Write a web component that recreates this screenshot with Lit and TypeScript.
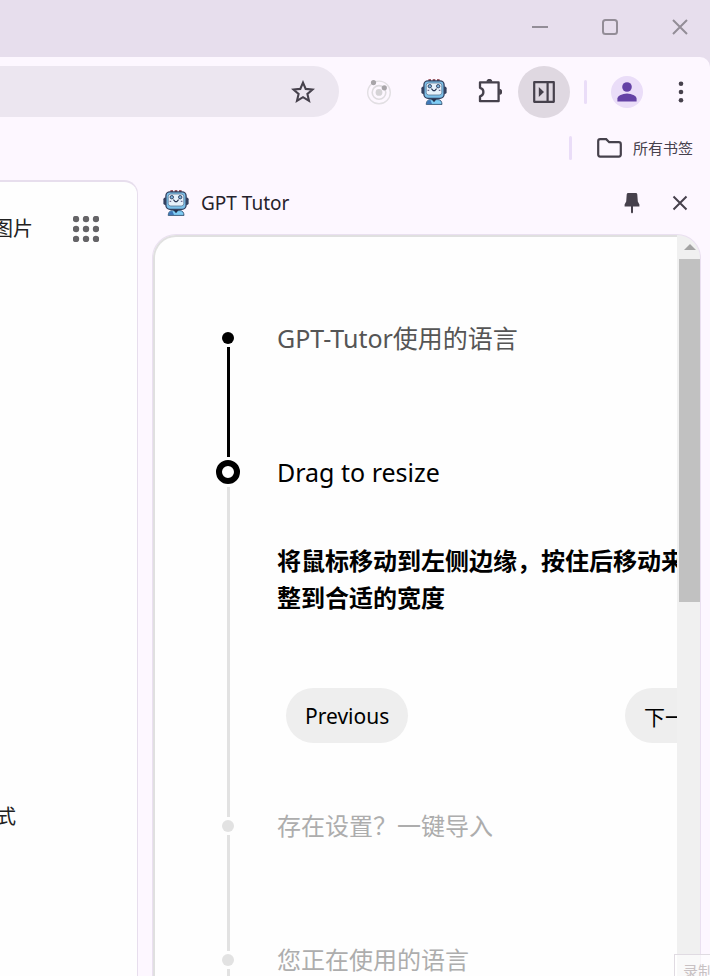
import { LitElement, html, css, svg } from "lit";
import { customElement, property } from "lit/decorators.js";

const robot = html`<svg class="robot" viewBox="0 0 26 26" width="26" height="26" aria-hidden="true">
  <rect x="0.4" y="7.4" width="4" height="7.6" rx="1.8" fill="#33405f" />
  <rect x="21.6" y="7.4" width="4" height="7.6" rx="1.8" fill="#33405f" />
  <path d="M5.2 25.4 Q5.4 20.8 9.4 20.6 H17 Q20.8 20.8 21 25.4 Z" fill="#7fcdf5" stroke="#33506f" stroke-width="0.9" />
  <path d="M5.6 25 Q6 21.2 9.4 21 L11 25 Z" fill="#3f78b8" />
  <path d="M10.4 20 H15.6 L13 23.2 Z" fill="#23304d" />
  <path d="M7.4 1.2 H18.6" stroke="#7a2d38" stroke-width="1.8" stroke-dasharray="2.6 1.7" />
  <rect x="2.9" y="1.9" width="20.2" height="17.4" rx="4" fill="#7cc0ea" stroke="#33405f" stroke-width="1.3" />
  <rect x="5.2" y="4" width="15.6" height="12" rx="2.6" fill="#e6f1fb" stroke="#5b7896" stroke-width="0.8" />
  <circle cx="8.8" cy="7.2" r="1.7" fill="#7db6e0" stroke="#2c3a58" stroke-width="0.9" />
  <circle cx="17.2" cy="7.2" r="1.7" fill="#7db6e0" stroke="#2c3a58" stroke-width="0.9" />
  <path d="M10.4 9.6 L12.2 11.6 H13.8 L15.6 9.6" fill="none" stroke="#23304d" stroke-width="1.1" />
  <path d="M6.6 11.4 h1.6 M17.8 11.4 h1.6" stroke="#6f6a90" stroke-width="1.2" />
</svg>`;

const shared = css`
  * { box-sizing: border-box; }
  button {
    border: 0;
    padding: 0;
    background: none;
    color: inherit;
    font: inherit;
    display: grid;
    place-items: center;
    cursor: pointer;
  }
  svg { display: block; }
`;

type StepState = "done" | "active" | "pending";

@customElement("tour-step")
class TourStep extends LitElement {
  @property() heading = "";
  @property({ reflect: true }) state: StepState = "pending";

  static styles = [shared, css`
    :host {
      --dot: 12px;
      --ink: #e2e2e2;
      --text: #adadad;
      --size: 24px;
      display: grid;
      grid-template-columns: 24px 456px;
      column-gap: 37px;
      min-height: 134px;
    }
    :host([state="done"]) { --ink: #000; --text: #555; --size: 25px; min-height: 128px; }
    :host([state="active"]) { --dot: 24px; --text: #000; --size: 25px; }
    .rail {
      display: flex;
      flex-direction: column;
      align-items: center;
      gap: 3px;
      padding-bottom: 3px;
    }
    .dot {
      width: var(--dot);
      height: var(--dot);
      border-radius: 50%;
      background: var(--ink);
    }
    :host([state="active"]) .dot { background: #fff; border: 6px solid #000; }
    .line { flex: 1; width: 3px; background: var(--ink); }
    .title {
      display: flex;
      align-items: center;
      height: var(--dot);
      margin: 0;
      font-size: var(--size);
      font-weight: 400;
      line-height: 36px;
      white-space: nowrap;
      color: var(--text);
    }
  `];

  render() {
    return html`
      <div class="rail"><span class="dot"></span><span class="line"></span></div>
      <div class="content">
        <h2 class="title">${this.heading}</h2>
        <slot></slot>
      </div>`;
  }
}

@customElement("side-panel")
class SidePanel extends LitElement {
  static styles = [shared, css`
    :host { display: flex; flex-direction: column; min-height: 0; }
    .head {
      display: flex;
      align-items: center;
      height: 54px;
      padding: 0 3px 8px 11px;
      color: #46414c;
    }
    .name { flex: 1; margin: 0 0 0 12px; font-size: 19px; font-weight: 400; line-height: 28px; color: #26222b; }
    .tool { width: 36px; height: 36px; }
    .tool + .tool { margin-left: 12px; }
    .card {
      flex: 1;
      min-height: 0;
      display: flex;
      overflow: hidden;
      border: 1px solid #eae0f0;
      border-bottom: 0;
      border-radius: 24px 24px 0 0;
      background: #f0f0f0;
    }
    .view {
      flex: 1;
      min-width: 0;
      overflow: hidden;
      padding: 95px 0 0 61px;
      border: solid #e0e0e0;
      border-width: 2px 0 0 2px;
      border-top-left-radius: 23px;
      background: #fefefe;
    }
    .desc { margin: 58px 0 0; padding-right: 9px; font-size: 24px; line-height: 37px; font-weight: 700; color: #000; }
    .actions {
      display: flex;
      justify-content: space-between;
      margin: 72px 7px 77px 9px;
    }
    .pill {
      height: 55px;
      padding: 0 19px;
      border-radius: 28px;
      background: #eee;
      color: #000;
      font-size: 21px;
      white-space: nowrap;
    }
    .scroll { width: 23px; display: flex; flex-direction: column; padding-left: 2px; }
    .up { height: 24px; }
    .thumb { height: 343px; background: #c1c1c1; }
  `];

  render() {
    return html`
      <header class="head">
        ${robot}
        <h1 class="name">GPT Tutor</h1>
        <button class="tool" aria-label="Pin">
          <svg width="16" height="22" viewBox="0 0 16 22"><path fill="currentColor" d="M3.8 1 H12.2 Q13.2 1 13.3 2.5 L13.8 9.5 L15.4 12.6 V14.6 H9 V20.5 L8 21.4 L7 20.5 V14.6 H0.6 V12.6 L2.2 9.5 L2.7 2.5 Q2.8 1 3.8 1 Z" /></svg>
        </button>
        <button class="tool" aria-label="Close">
          <svg width="16" height="16" viewBox="0 0 16 16"><path d="M1.5 1.5 L14.5 14.5 M14.5 1.5 L1.5 14.5" stroke="currentColor" stroke-width="2" /></svg>
        </button>
      </header>
      <div class="card">
        <div class="view">
          <tour-step state="done" heading="GPT-Tutor使用的语言"></tour-step>
          <tour-step state="active" heading="Drag to resize">
            <p class="desc">将鼠标移动到左侧边缘，按住后移动来调整到合适的宽度</p>
            <div class="actions">
              <button class="pill">Previous</button>
              <button class="pill">下一步</button>
            </div>
          </tour-step>
          <tour-step heading="存在设置？一键导入"></tour-step>
          <tour-step heading="您正在使用的语言"></tour-step>
        </div>
        <div class="scroll">
          <button class="up" aria-label="Scroll up">
            <svg width="12" height="6" viewBox="0 0 12 6"><path d="M6 0 L12 6 H0 Z" fill="#a3a3a3" /></svg>
          </button>
          <div class="thumb"></div>
        </div>
      </div>`;
  }
}

@customElement("app-root")
class AppRoot extends LitElement {
  static styles = [shared, css`
    :host {
      display: flex;
      flex-direction: column;
      height: 100vh;
      overflow: hidden;
      position: relative;
      background: #e7deed;
      color: #46414c;
      font-family: "Noto Sans", "Noto Sans CJK SC", sans-serif;
    }
    .titlebar {
      display: flex;
      justify-content: flex-end;
      gap: 10px;
      height: 57px;
      padding-bottom: 3px;
      color: #938d97;
    }
    .win { width: 60px; }
    .browser {
      flex: 1;
      min-height: 0;
      display: flex;
      flex-direction: column;
      border-top-right-radius: 10px;
      background: #fdf7ff;
    }
    .toolbar {
      display: flex;
      align-items: center;
      height: 70px;
      padding-right: 3px;
    }
    .address {
      flex: 1;
      display: flex;
      align-items: center;
      justify-content: flex-end;
      height: 51px;
      margin: 0 14px 1px 0;
      padding-right: 10px;
      border-radius: 0 26px 26px 0;
      background: #ece6f0;
    }
    .round { width: 52px; height: 52px; border-radius: 50%; }
    .round + .round { margin-left: 3px; }
    .round.on { background: #dfd8e1; }
    .divider { width: 3px; height: 24px; border-radius: 2px; background: #eaddf8; }
    .toolbar .divider { margin: 0 24px 0 14px; }
    .avatar { width: 32px; height: 32px; margin-right: 12px; border-radius: 50%; background: #eaddf8; color: #6442a5; }
    .bookmarks {
      display: flex;
      align-items: center;
      justify-content: flex-end;
      height: 53px;
      padding: 0 17px 12px 0;
    }
    .folder {
      display: flex;
      align-items: center;
      gap: 11px;
      margin-left: 25px;
      font-size: 15px;
      line-height: 24px;
    }
    .body {
      flex: 1;
      min-height: 0;
      display: flex;
      gap: 14px;
      padding-right: 9px;
    }
    .page {
      flex: 1;
      min-width: 0;
      display: flex;
      flex-direction: column;
      justify-content: space-between;
      overflow: hidden;
      border: solid #e7deed;
      border-width: 2px 1px 0 0;
      border-top-right-radius: 14px;
      background: #fefefe;
    }
    .nav {
      display: flex;
      align-items: center;
      justify-content: flex-end;
      gap: 40px;
      height: 94px;
      padding-right: 38px;
    }
    .link { flex: none; color: #222; font-size: 20px; line-height: 30px; text-decoration: none; }
    .foot { display: flex; justify-content: flex-end; padding: 0 121px 144px 0; }
    .panel { flex: none; width: 549px; }
    .toast {
      position: absolute;
      right: 0;
      bottom: 0;
      width: 36px;
      height: 22px;
      padding: 4px 0 0 8px;
      overflow: hidden;
      border: solid #e0dbe2;
      border-width: 1px 0 0 1px;
      background: rgb(255 255 255 / 60%);
      color: #c8c1c3;
      font-size: 15px;
      line-height: 24px;
      white-space: nowrap;
    }
  `];

  render() {
    const dots = [3, 13, 23];
    return html`
      <header class="titlebar">
        <button class="win" aria-label="Minimize"><svg width="16" height="16"><path d="M0 8 H16" stroke="currentColor" stroke-width="2" /></svg></button>
        <button class="win" aria-label="Maximize"><svg width="16" height="16"><rect x="1" y="1" width="14" height="14" rx="2.5" fill="none" stroke="currentColor" stroke-width="2" /></svg></button>
        <button class="win" aria-label="Close window"><svg width="16" height="16"><path d="M1 1 L15 15 M15 1 L1 15" stroke="currentColor" stroke-width="2" /></svg></button>
      </header>
      <div class="browser">
        <div class="toolbar">
          <div class="address">
            <button class="round" aria-label="Bookmark this tab">
              <svg width="24" height="24" viewBox="0 0 24 24"><path fill="none" stroke="currentColor" stroke-width="2.1" d="M12 2.6 L14.7 8.9 L21.6 9.5 L16.4 14 L18 20.8 L12 17.2 L6 20.8 L7.6 14 L2.4 9.5 L9.3 8.9 Z" /></svg>
            </button>
          </div>
          <button class="round" aria-label="Orbit extension">
            <svg width="26" height="26" viewBox="0 0 26 26" fill="none">
              <circle cx="13" cy="13.4" r="11.3" stroke="#e2dfe3" stroke-width="1.4" />
              <circle cx="13" cy="13.4" r="6.8" stroke="#dedbdf" stroke-width="1.6" />
              <circle cx="13" cy="13.4" r="3.4" fill="#d5d3d6" />
              <circle cx="7.5" cy="3.6" r="2.6" fill="#a8a5a9" />
              <circle cx="18.3" cy="8.8" r="2.6" fill="#a8a5a9" />
            </svg>
          </button>
          <button class="round" aria-label="GPT Tutor extension">${robot}</button>
          <button class="round" aria-label="Extensions">
            <svg width="26" height="26" viewBox="0 0 26 26">
              <path d="M4 3.4 H22.6 V22.2 H4 V17.4 Q7.4 16.4 7.4 13 Q7.4 9.6 4 8.8 Z" fill="none" stroke="currentColor" stroke-width="2.3" stroke-linejoin="round" />
              <path d="M10.4 2.8 A3 2.9 0 0 1 16.4 2.8 Z M23.2 9.8 A3 3 0 0 1 23.2 15.8 Z" fill="currentColor" />
            </svg>
          </button>
          <button class="round on" aria-label="Side panel">
            <svg width="22" height="22" viewBox="0 0 22 22">
              <path d="M1.2 1.2 H20.8 V20.8 H1.2 Z M14.6 1.2 V20.8" fill="none" stroke="currentColor" stroke-width="2.2" stroke-linejoin="round" />
              <path d="M5.8 6 L11 11 L5.8 16 Z" fill="currentColor" />
            </svg>
          </button>
          <span class="divider"></span>
          <button class="avatar" aria-label="Profile">
            <svg width="20" height="20" viewBox="0 0 20 20" fill="currentColor"><circle cx="10" cy="5" r="4.8" /><path d="M0.4 19.6 V16.6 Q0.4 14.4 3 13.2 Q10 10 17 13.2 Q19.6 14.4 19.6 16.6 V19.6 Z" /></svg>
          </button>
          <button class="round" aria-label="Menu">
            <svg width="6" height="22" fill="currentColor"><circle cx="3" cy="2.7" r="2.3" /><circle cx="3" cy="11" r="2.3" /><circle cx="3" cy="19.3" r="2.3" /></svg>
          </button>
        </div>
        <div class="bookmarks">
          <span class="divider"></span>
          <button class="folder">
            <svg width="25" height="20" viewBox="0 0 25 20"><path d="M1.2 3.2 Q1.2 1.2 3.2 1.2 H9.2 L12.2 4.2 H21.8 Q23.8 4.2 23.8 6.2 V16.6 Q23.8 18.6 21.8 18.6 H3.2 Q1.2 18.6 1.2 16.6 Z" fill="none" stroke="currentColor" stroke-width="2.2" /></svg>
            所有书签
          </button>
        </div>
        <div class="body">
          <main class="page">
            <nav class="nav">
              <a class="link" href="#images">图片</a>
              <button aria-label="Apps">
                <svg width="26" height="26" fill="#656467">${dots.map((y) => dots.map((x) => svg`<circle cx=${x} cy=${y} r="3.2" />`))}</svg>
              </button>
            </nav>
            <div class="foot"><a class="link" href="#mode">式</a></div>
          </main>
          <side-panel class="panel"></side-panel>
        </div>
      </div>
      <div class="toast">录制</div>`;
  }
}
